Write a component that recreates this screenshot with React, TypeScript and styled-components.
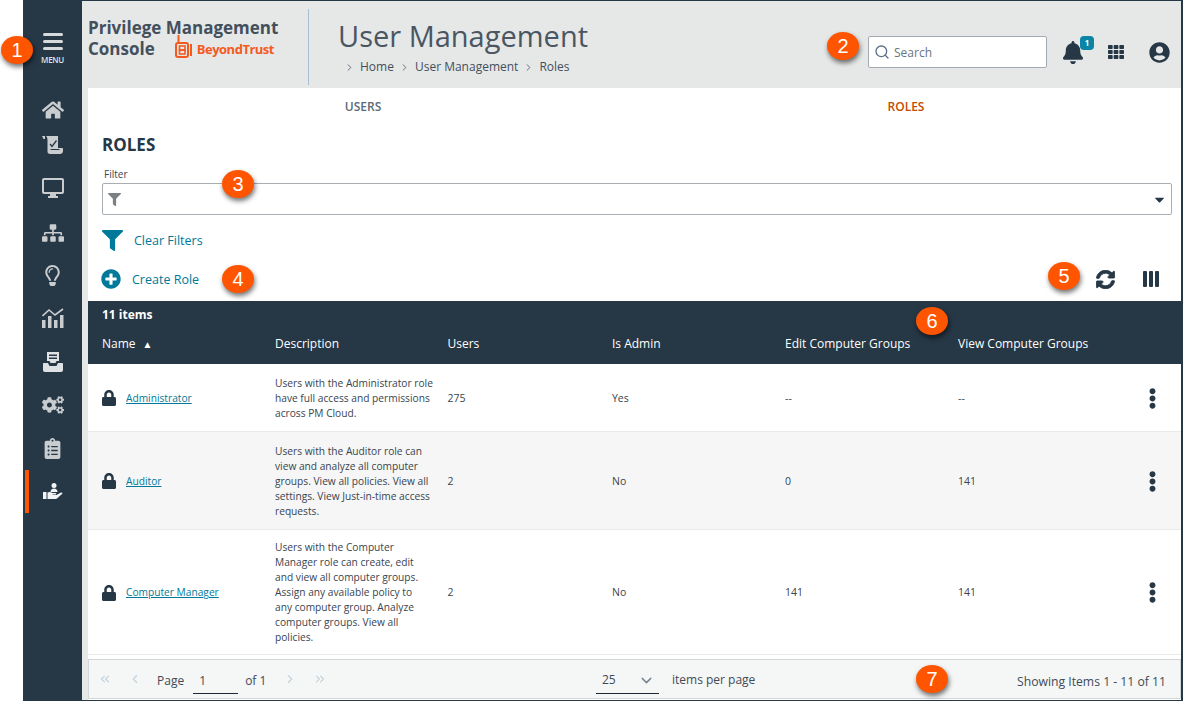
import React from 'react';
import styled, { createGlobalStyle } from 'styled-components';
import {
  FaHome, FaSitemap, FaRegLightbulb, FaCogs, FaClipboardList, FaBell, FaTh, FaUserCircle,
  FaFilter, FaPlusCircle, FaSyncAlt, FaLock, FaEllipsisV, FaCaretDown,
} from 'react-icons/fa';
import { FiSearch, FiChevronDown, FiChevronLeft, FiChevronRight, FiChevronsLeft, FiChevronsRight } from 'react-icons/fi';

const navy = '#263746';
const teal = '#00799a';

const GlobalStyle = createGlobalStyle`
  html, body { margin: 0; padding: 0; background: #fff; height: 100%; overflow: hidden; }
  body { font-family: "Open Sans", "Noto Sans", sans-serif; color: ${navy}; }
  * { box-sizing: border-box; }
`;

const Frame = styled.div`
  position: relative;
  width: 1183px;
  height: 701px;
  padding-left: 23px;
  background: #fff;
`;

const Window = styled.div`
  display: flex;
  width: 1160px;
  height: 701px;
  border-top: 1px solid ${navy};
  border-right: 2px solid ${navy};
  border-bottom: 1px solid ${navy};
  background: #e6e8e8;
`;

const Sidebar = styled.nav`
  width: 59px;
  flex: none;
  background: ${navy};
  display: flex;
  flex-direction: column;
  align-items: stretch;
`;

const MenuButton = styled.div`
  height: 93px;
  padding-top: 32px;
  display: flex;
  flex-direction: column;
  align-items: center;
  color: #dfe3e6;
`;

const MenuBars = styled.div`
  width: 20px;
  height: 17px;
  display: flex;
  flex-direction: column;
  justify-content: space-between;
  span { display: block; height: 3px; border-radius: 2px; background: #d6dadd; }
`;

const MenuLabel = styled.div`
  margin-top: 5px;
  font-size: 8px;
  line-height: 9px;
  font-weight: 600;
  letter-spacing: -0.3px;
`;

const NavItem = styled.div<{ $active?: boolean; $height: number }>`
  height: ${p => p.$height}px;
  display: flex;
  align-items: center;
  justify-content: center;
  color: ${p => (p.$active ? '#f1f3f4' : '#c9cdd0')};
  border-left: 4px solid ${p => (p.$active ? '#ff5500' : 'transparent')};
  margin-left: 2px;
  padding-right: 6px;
`;

const Main = styled.div`
  flex: 1;
  min-width: 0;
  display: flex;
  flex-direction: column;
`;

const Header = styled.header`
  height: 87px;
  flex: none;
  display: flex;
  align-items: flex-start;
  padding-left: 6px;
`;

const Brand = styled.div`
  width: 221px;
  height: 76px;
  margin-top: 8px;
  border-right: 1px solid #a9bdd2;
  padding-top: 9px;
  font-size: 17px;
  line-height: 20px;
  font-weight: 700;
  color: #444f5c;
`;

const BrandLine = styled.div`
  display: flex;
  align-items: center;
`;

const LogoWrap = styled.div`
  display: flex;
  align-items: center;
  margin-left: 20px;
  margin-top: 1px;
  color: #f45a1f;
  font-size: 13px;
  font-weight: 700;
  letter-spacing: -0.5px;
  gap: 4px;
  svg { margin-top: -5px; }
`;

const TitleBlock = styled.div`
  margin-left: 29px;
  padding-top: 15px;
`;

const PageTitle = styled.h1`
  margin: 0;
  font-size: 29px;
  line-height: 40px;
  font-weight: 400;
  color: #4b5663;
`;

const Breadcrumb = styled.div`
  margin-top: 3px;
  padding-left: 6px;
  display: flex;
  align-items: center;
  gap: 5px;
  font-size: 12px;
  line-height: 16px;
  color: #444f5c;
  svg { color: #59656f; }
`;

const HeaderTools = styled.div`
  margin-left: auto;
  margin-top: 35px;
  padding-right: 11px;
  display: flex;
  align-items: center;
  color: ${navy};
`;

const SearchBox = styled.div`
  width: 179px;
  height: 32px;
  background: #fff;
  border: 1px solid #a3abb2;
  border-radius: 2px;
  display: flex;
  align-items: center;
  padding-left: 5px;
  gap: 4px;
  font-size: 12px;
  color: #69747e;
  margin-right: 15px;
  svg { color: #5a7087; }
`;

const BellWrap = styled.div`
  position: relative;
  width: 22px;
  height: 24px;
  margin-right: 24px;
  display: flex;
  align-items: center;
`;

const Badge = styled.span`
  position: absolute;
  top: -4px;
  left: 18px;
  width: 14px;
  height: 14px;
  border-radius: 4px;
  background: #0a85a6;
  color: #fff;
  font-size: 8px;
  line-height: 14px;
  font-weight: 700;
  text-align: center;
`;

const ToolIcon = styled.div<{ $gap?: number }>`
  display: flex;
  margin-right: ${p => p.$gap ?? 0}px;
`;

const Content = styled.div`
  flex: 1;
  min-height: 0;
  margin-left: 6px;
  background: #fff;
  display: flex;
  flex-direction: column;
`;

const Tabs = styled.div`
  display: grid;
  grid-template-columns: 546px 1fr;
  height: 36px;
  align-items: center;
  text-align: center;
  font-size: 12px;
  font-weight: 600;
`;

const Tab = styled.div<{ $active?: boolean }>`
  color: ${p => (p.$active ? '#c44c00' : '#5c6a78')};
  padding-right: ${p => (p.$active ? 3 : 0)}px;
  padding-left: ${p => (p.$active ? 0 : 4)}px;
`;

const Section = styled.div`
  padding: 10px 9px 0 14px;
`;

const Heading = styled.h2`
  margin: 0;
  font-size: 17px;
  line-height: 22px;
  font-weight: 700;
  color: ${navy};
`;

const FilterLabel = styled.div`
  margin-top: 12px;
  padding-left: 2px;
  font-size: 10px;
  line-height: 12px;
  color: #3a4652;
`;

const FilterBox = styled.div`
  margin-top: 3px;
  height: 32px;
  border: 1px solid #a9aeb3;
  border-radius: 2px;
  display: flex;
  align-items: center;
  justify-content: space-between;
  padding: 0 4px 0 5px;
  color: #7d8083;
`;

const ActionRow = styled.div<{ $height: number }>`
  display: flex;
  align-items: center;
  height: ${p => p.$height}px;
  font-size: 12.5px;
  color: ${teal};
`;

const ActionLink = styled.span<{ $left: number }>`
  margin-left: ${p => p.$left}px;
`;

const CreateIcon = styled(FaPlusCircle)`
  margin-left: -1px;
  color: ${teal};
`;

const RightTools = styled.div`
  margin-left: auto;
  display: flex;
  align-items: center;
  gap: 28px;
  padding-right: 11px;
  color: ${navy};
`;

const RefreshIcon = styled(FaSyncAlt)`
  stroke: currentColor;
  stroke-width: 24px;
`;

const ColumnBars = styled.div`
  display: flex;
  gap: 2px;
  margin-right: 2px;
  span { width: 4px; height: 16px; background: ${navy}; border-radius: 1px; }
`;

const Table = styled.div`
  flex: 1;
  min-height: 0;
  display: flex;
  flex-direction: column;
`;

const TableHead = styled.div`
  height: 63px;
  flex: none;
  margin-top: 8px;
  background: ${navy};
  color: #fff;
`;

const ItemCount = styled.div`
  padding: 5px 0 0 14px;
  font-size: 12px;
  line-height: 17px;
  font-weight: 700;
`;

const columns = '187px 172.5px 164.5px 173px 173px 1fr';

const HeadRow = styled.div`
  display: grid;
  grid-template-columns: ${columns};
  padding-top: 12px;
  font-size: 12px;
  line-height: 17px;
  font-weight: 500;
`;

const HeadCell = styled.div<{ $first?: boolean }>`
  padding-left: ${p => (p.$first ? 14 : 0)}px;
`;

const SortMark = styled.span`
  margin-left: 7px;
  font-size: 10px;
`;

const Row = styled.div<{ $height: number; $shade?: boolean }>`
  display: grid;
  grid-template-columns: ${columns};
  align-items: center;
  height: ${p => p.$height}px;
  flex: none;
  padding-top: 1px;
  background: ${p => (p.$shade ? '#f6f6f6' : '#fff')};
  border-bottom: 1px solid #e9eaea;
  font-size: 10.5px;
  line-height: 15px;
  color: #38444f;
`;

const NameCell = styled.div`
  display: flex;
  align-items: center;
  padding-left: 13px;
  gap: 9px;
  color: ${navy};
`;

const RoleLink = styled.a`
  color: ${teal};
  text-decoration: underline;
  font-size: 10.2px;
`;

const Description = styled.div`
  font-size: 10.2px;
  white-space: pre-line;
`;

const ViewCell = styled.div`
  display: flex;
  align-items: center;
  justify-content: space-between;
  padding-right: 18px;
`;

const Kebab = styled.div`
  display: flex;
  color: ${navy};
`;

const Pager = styled.footer`
  margin-top: auto;
  margin-bottom: 1px;
  height: 40px;
  flex: none;
  border: 1px solid #d3d6d6;
  background: #f5f6f6;
  display: grid;
  grid-template-columns: 507px 1fr auto;
  align-items: center;
  font-size: 12px;
  color: #3f4b56;
`;

const PagerLeft = styled.div`
  display: flex;
  align-items: center;
  padding-left: 9px;
  color: #c3d3dc;
`;

const PageIcon = styled.span<{ $gap: number }>`
  display: flex;
  margin-right: ${p => p.$gap}px;
`;

const PagerText = styled.span<{ $gap: number }>`
  color: #3f4b56;
  margin-right: ${p => p.$gap}px;
  padding-top: 2px;
`;

const PageInput = styled.div`
  width: 45px;
  height: 26px;
  margin: 4px 7px 0 9px;
  padding: 4px 0 0 6px;
  border-bottom: 1px solid #1c2833;
  color: #3f4b56;
`;

const PagerMiddle = styled.div`
  display: flex;
  align-items: center;
  gap: 13px;
  padding-top: 1px;
`;

const PerPage = styled.div`
  width: 63px;
  height: 26px;
  margin-top: 3px;
  padding: 3px 4px 0 6px;
  border-bottom: 1px solid #1c2833;
  display: flex;
  justify-content: space-between;
  svg { color: #7b858d; margin-top: 1px; }
`;

const Showing = styled.div`
  padding-right: 14px;
  padding-top: 4px;
  font-size: 12.2px;
`;

const Callout = styled.div<{ $x: number; $y: number }>`
  position: absolute;
  left: ${p => p.$x - 16}px;
  top: ${p => p.$y - 14}px;
  width: 32px;
  height: 28px;
  border-radius: 50%;
  background: #ff5500;
  color: #fff;
  font-family: "Liberation Sans", Arial, sans-serif;
  font-size: 20px;
  line-height: 28px;
  text-align: center;
  box-shadow: 1px 3px 5px rgba(0, 0, 0, 0.55);
`;

const Scroll = () => (
  <svg width="21" height="18" viewBox="0 0 21 18" fill="#c9cdd0">
    <path d="M0 0h3v3H1.500z" />
    <path d="M4 0h12v12h4c.6 0 1 .5 1 1v2c0 1.500-1 3-3 3H8c-1.600 0-2.500-1-2.500-2.500V5C5.500 3 5.500 1 4 0z" />
    <path d="M8 8l2 2.500L14.500 4.500" fill="none" stroke="#263746" strokeWidth="1.300" />
    <path d="M8.500 13.500h9" stroke="#263746" strokeWidth="1" />
  </svg>
);

const Monitor = () => (
  <svg width="22" height="20" viewBox="0 0 22 20" fill="#c9cdd0">
    <path fillRule="evenodd" d="M2 0h18a2 2 0 012 2v12a2 2 0 01-2 2h-6v2h2v2H6v-2h2v-2H2a2 2 0 01-2-2V2a2 2 0 012-2zm0 2v12h18V2z" />
  </svg>
);

const Analytics = () => (
  <svg width="22" height="20" viewBox="0 0 22 20" fill="#c9cdd0">
    <rect x="0" y="12" width="3.500" height="8" />
    <rect x="6" y="8" width="3.500" height="12" />
    <rect x="12" y="12" width="3.500" height="8" />
    <rect x="18" y="7" width="3.500" height="13" />
    <path d="M0.500 8L7 2l6 5 8-6" fill="none" stroke="#c9cdd0" strokeWidth="1.600" />
  </svg>
);

const Inbox = () => (
  <svg width="20" height="20" viewBox="0 0 20 20" fill="#dfe2e4">
    <path fillRule="evenodd" d="M4 0h12v9h-2.500l-1 2h-5l-1-2H4zm2 2.500v1.500h8V2.500zM6 5.500V7h8V5.500z" />
    <path d="M1 11h4l1.500 3h7L15 11h4c.6 0 1 .4 1 1v6c0 1-.8 2-2 2H2c-1.200 0-2-1-2-2v-6c0-.6.4-1 1-1z" />
  </svg>
);

const HandUser = () => (
  <svg width="20" height="17" viewBox="0 0 20 17" fill="#f1f3f4">
    <circle cx="11" cy="2.500" r="2.500" />
    <path d="M7.500 9c0-2 1.500-3.500 3.500-3.500s3.500 1.500 3.500 3.500z" />
    <rect x="0" y="9" width="3.500" height="7" />
    <path d="M4.500 9.500c2-1 3.500-.5 5 .5h3c1 0 1 1.500 0 1.500H9.500v.5h4l4.500-2.500c1.200-.5 2 .8 1 1.500L14 15.500c-1 .5-1.500.5-2.500.5h-7z" />
  </svg>
);

const BeyondTrustMark = () => (
  <svg width="18" height="23" viewBox="0 0 18 23" fill="none" stroke="#f45a1f" strokeWidth="2">
    <path d="M3.500 8V0" />
    <rect x="1" y="8" width="12" height="14" rx="2" />
    <rect x="4.500" y="11" width="5.500" height="4" strokeWidth="1.600" />
    <rect x="4.500" y="15" width="5.500" height="4" strokeWidth="1.600" />
    <path d="M16 9v12" />
  </svg>
);

const navItems = [
  { height: 32, icon: <FaHome size={22} /> },
  { height: 38, icon: <Scroll /> },
  { height: 48, icon: <Monitor /> },
  { height: 42, icon: <FaSitemap size={22} /> },
  { height: 42, icon: <FaRegLightbulb size={21} /> },
  { height: 44, icon: <Analytics /> },
  { height: 44, icon: <Inbox /> },
  { height: 42, icon: <FaCogs size={22} /> },
  { height: 44, icon: <FaClipboardList size={21} /> },
  { height: 43, icon: <HandUser />, active: true },
];

const rows = [
  { name: 'Administrator', height: 68, desc: 'Users with the Administrator role\nhave full access and permissions\nacross PM Cloud.', users: '275', admin: 'Yes', edit: '--', view: '--' },
  { name: 'Auditor', height: 98, shade: true, desc: 'Users with the Auditor role can\nview and analyze all computer\ngroups. View all policies. View all\nsettings. View Just-in-time access\nrequests.', users: '2', admin: 'No', edit: '0', view: '141' },
  { name: 'Computer Manager', height: 125, desc: 'Users with the Computer\nManager role can create, edit\nand view all computer groups.\nAssign any available policy to\nany computer group. Analyze\ncomputer groups. View all\npolicies.', users: '2', admin: 'No', edit: '141', view: '141' },
];

const callouts = [
  { n: 1, x: 17, y: 50 },
  { n: 2, x: 843, y: 46 },
  { n: 3, x: 238, y: 184 },
  { n: 4, x: 238, y: 279 },
  { n: 5, x: 1064, y: 276 },
  { n: 6, x: 932, y: 321 },
  { n: 7, x: 932, y: 679 },
];

const App: React.FC = () => (
  <Frame>
    <GlobalStyle />
    <Window>
      <Sidebar>
        <MenuButton>
          <MenuBars><span /><span /><span /></MenuBars>
          <MenuLabel>MENU</MenuLabel>
        </MenuButton>
        {navItems.map((item, i) => (
          <NavItem key={i} $height={item.height} $active={item.active}>{item.icon}</NavItem>
        ))}
      </Sidebar>
      <Main>
        <Header>
          <Brand>
            <div>Privilege Management</div>
            <BrandLine>
              Console
              <LogoWrap><BeyondTrustMark />BeyondTrust</LogoWrap>
            </BrandLine>
          </Brand>
          <TitleBlock>
            <PageTitle>User Management</PageTitle>
            <Breadcrumb>
              <FiChevronRight size={11} /> Home
              <FiChevronRight size={11} /> User Management
              <FiChevronRight size={11} /> Roles
            </Breadcrumb>
          </TitleBlock>
          <HeaderTools>
            <SearchBox><FiSearch size={16} />Search</SearchBox>
            <BellWrap><FaBell size={23} /><Badge>1</Badge></BellWrap>
            <ToolIcon $gap={25}><FaTh size={16} /></ToolIcon>
            <ToolIcon><FaUserCircle size={21} /></ToolIcon>
          </HeaderTools>
        </Header>
        <Content>
          <Tabs>
            <Tab>USERS</Tab>
            <Tab $active>ROLES</Tab>
          </Tabs>
          <Section>
            <Heading>ROLES</Heading>
            <FilterLabel>Filter</FilterLabel>
            <FilterBox>
              <FaFilter size={13} />
              <FaCaretDown size={15} color={navy} />
            </FilterBox>
            <ActionRow $height={50}>
              <FaFilter size={21} color="#00799a" />
              <ActionLink $left={11}>Clear Filters</ActionLink>
            </ActionRow>
            <ActionRow $height={28}>
              <CreateIcon size={20} />
              <ActionLink $left={11}>Create Role</ActionLink>
              <RightTools>
                <RefreshIcon size={19} />
                <ColumnBars><span /><span /><span /></ColumnBars>
              </RightTools>
            </ActionRow>
          </Section>
          <Table>
            <TableHead>
              <ItemCount>11 items</ItemCount>
              <HeadRow>
                <HeadCell $first>Name<SortMark>▲</SortMark></HeadCell>
                <HeadCell>Description</HeadCell>
                <HeadCell>Users</HeadCell>
                <HeadCell>Is Admin</HeadCell>
                <HeadCell>Edit Computer Groups</HeadCell>
                <HeadCell>View Computer Groups</HeadCell>
              </HeadRow>
            </TableHead>
            {rows.map(r => (
              <Row key={r.name} $height={r.height} $shade={r.shade}>
                <NameCell>
                  <FaLock size={16} />
                  <RoleLink>{r.name}</RoleLink>
                </NameCell>
                <Description>{r.desc}</Description>
                <div>{r.users}</div>
                <div>{r.admin}</div>
                <div>{r.edit}</div>
                <ViewCell>
                  {r.view}
                  <Kebab><FaEllipsisV size={21} /></Kebab>
                </ViewCell>
              </Row>
            ))}
            <Pager>
              <PagerLeft>
                <PageIcon $gap={16}><FiChevronsLeft size={14} /></PageIcon>
                <PageIcon $gap={15}><FiChevronLeft size={14} /></PageIcon>
                <PagerText $gap={0}>Page</PagerText>
                <PageInput>1</PageInput>
                <PagerText $gap={17}>of 1</PagerText>
                <PageIcon $gap={16}><FiChevronRight size={14} /></PageIcon>
                <PageIcon $gap={0}><FiChevronsRight size={14} /></PageIcon>
              </PagerLeft>
              <PagerMiddle>
                <PerPage>25 <FiChevronDown size={17} /></PerPage>
                items per page
              </PagerMiddle>
              <Showing>Showing Items 1 - 11 of 11</Showing>
            </Pager>
          </Table>
        </Content>
      </Main>
    </Window>
    {callouts.map(c => (
      <Callout key={c.n} $x={c.x} $y={c.y}>{c.n}</Callout>
    ))}
  </Frame>
);

export default App;
